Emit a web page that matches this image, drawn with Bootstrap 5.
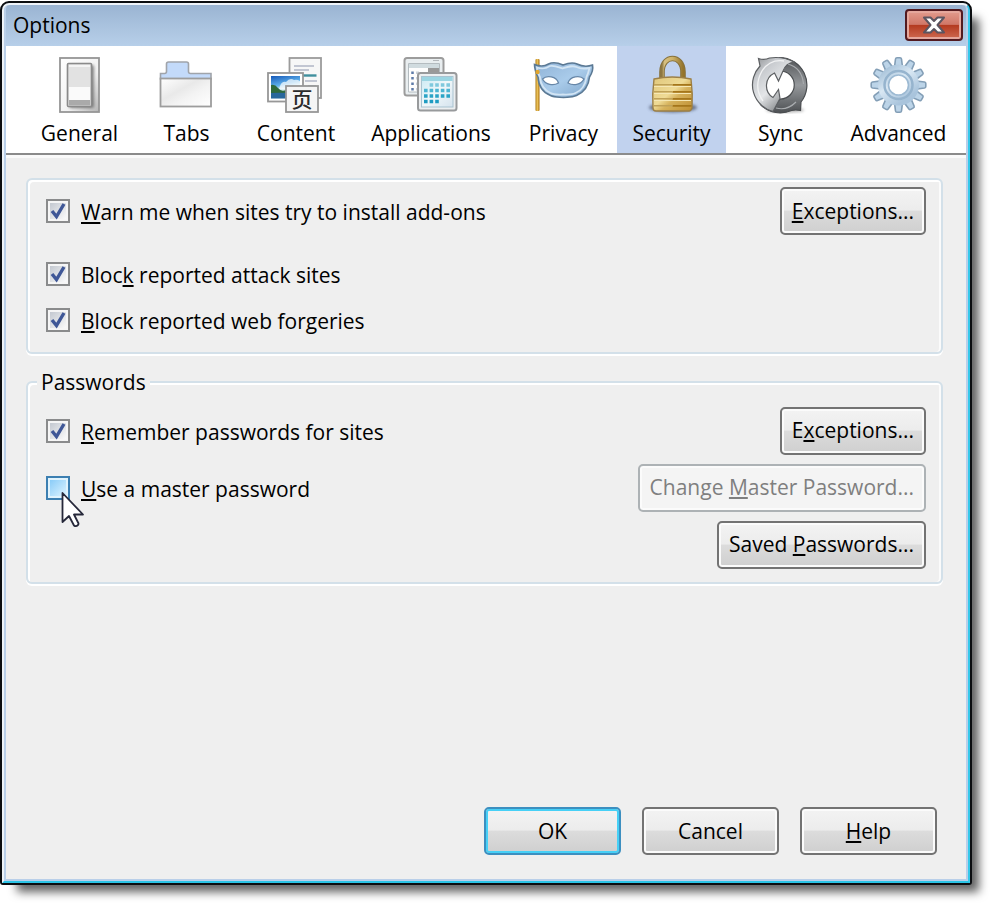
<!DOCTYPE html>
<html lang="en">
<head>
<meta charset="utf-8">
<meta name="viewport" content="width=device-width, initial-scale=1">
<title>Options</title>
<link href="https://cdn.jsdelivr.net/npm/bootstrap@5.3.0/dist/css/bootstrap.min.css" rel="stylesheet">
<style>
  body { font-family: "Open Sans", "Noto Sans CJK SC", sans-serif; font-size: 21px; line-height: 30px; color: #000; background: #fff; }
  u { text-decoration-thickness: 2px; text-underline-offset: 2px; text-decoration-skip-ink: none; }

  .page { min-height: 100vh; padding: 1px 28px 26px 0; }
  .dialog-edge { border: 2px solid #0b0d10; border-radius: 9px 9px 3px 3px; background: #0b0d10; box-shadow: 12px 12px 10px -5px rgba(0,0,0,.62); }
  .dialog-rim { border: 2px solid; border-color: #eef3f8 #35c8ea #2bc4e6 #eef3f8; border-radius: 7px 7px 0 0; background: #b9d1ea; }
  .dialog-face { border: solid #b9cfe9; border-width: 0 2px 2px; border-radius: 5px 5px 0 0; background: #efefef; }

  .titlebar { height: 41px; padding: 0 3px 2px 7px; background: linear-gradient(#9ab4d2, #a9c2de 50%, #b7cfe9); border-radius: 4px 4px 0 0; }
  .titlebar h1 { font-size: 21px; line-height: 30px; font-weight: 400; }
  .close-button { width: 58px; height: 32px; padding: 0; border: 2px solid #521a20; border-radius: 4px; box-shadow: inset 0 0 0 2px #e5a79c; background: linear-gradient(#e39c8e, #d07768 48%, #b3391f 50%, #cf6a52); }

  .tab-strip { display: grid; grid-template-columns: 107fr 107fr 112fr 158fr 107fr 109fr 109fr 127fr; padding: 0 4px 0 20px; background: #fff; border-bottom: 2px solid #8b8b8b; box-shadow: 0 3px 0 #fafafa; }
  .tab-strip a { padding: 9px 0 5px; color: #000; text-decoration: none; white-space: nowrap; }
  .tab-strip a.active { background: #c1d2ee; }
  .tab-strip svg { width: 64px; height: 60px; margin-bottom: 3px; }

  .pane { padding: 23px 23px 0 20px; }
  .group-frame { border: 2px solid #d3e0e9; border-radius: 6px; box-shadow: inset 2px 2px 0 #fff, inset -2px 0 0 #fbfbfb, 0 2px 0 #fff; padding: 0 15px 0 18px; }
  .group-frame + .group-frame { margin-top: 13px; }
  .group-frame legend { font-size: 21px; line-height: 30px; margin: 0 0 5px -9px; padding: 0 4px; background: #efefef; }

  .tick { flex: none; width: 24px; height: 24px; margin: 0; appearance: none; border: 2px solid #8a8b8c; background: #f6f6f6 linear-gradient(135deg, #c3c8d0, #fafafa) center / 16px 16px no-repeat; }
  .tick:checked { background: url("data:image/svg+xml,%3Csvg xmlns='http://www.w3.org/2000/svg' viewBox='0 0 20 20'%3E%3Cpath d='M4 10l4.500 5.500 7.500-12.500' fill='none' stroke='%233f5797' stroke-width='3.400'/%3E%3C/svg%3E") center / 20px 20px no-repeat, #f6f6f6 linear-gradient(135deg, #c3c8d0, #fafafa) center / 16px 16px no-repeat; }
  .tick.hot { border-color: #3c7fb1; background: #e0f3fd linear-gradient(135deg, #8accf8, #dcf3ff) center / 16px 16px no-repeat; }
  .group-frame label { padding: 2px 0 0 3px; }
  .pointer { position: absolute; left: 15px; top: 15px; width: 24px; height: 38px; pointer-events: none; }

  .push { height: 48px; padding: 0 10px 1px; border: 2px solid #737373; border-radius: 5px; color: #000; font-size: 21px; line-height: 30px; white-space: nowrap; background: linear-gradient(#f3f3f3, #ececec 48%, #dcdcdc 50%, #cfcfcf); box-shadow: inset 0 0 0 2px #fbfbfb; }
  .push:disabled { border-color: #adb2b5; background: #f4f4f4; color: #7f7f7f; }
  .push.default { border-color: #3c8fc0; box-shadow: inset 0 0 0 2px #46d0f6; }
  .push.wide { width: 137px; }

  .row-first { min-height: 58px; margin-bottom: 13px; }
  .row-tall { min-height: 57px; }
  .row-short { min-height: 46px; }
  .row-last { margin-bottom: 9px; }
  .actions { margin-top: 223px; padding: 0 6px 24px 0; gap: 21px; }
</style>
</head>
<body>
<div class="page">
<main class="dialog-edge">
<div class="dialog-rim">
<div class="dialog-face">

  <header class="titlebar d-flex align-items-center justify-content-between">
    <h1 class="m-0">Options</h1>
    <button type="button" class="close-button d-flex align-items-center justify-content-center" aria-label="Close">
      <svg width="24" height="20" viewBox="0 0 24 20"><path d="M2 2.500h6.500l3.500 3.500 3.500-3.500H22L15.500 10l6.500 7.500h-6.500L12 14l-3.500 3.500H2L8.500 10z" fill="#fff" stroke="#5c5560" stroke-width="2" stroke-linejoin="round"/></svg>
    </button>
  </header>

  <nav class="tab-strip" aria-label="Option categories">
    <a href="#general" class="d-flex flex-column align-items-center">
      <svg viewBox="0 0 64 60" aria-hidden="true">
        <defs>
          <linearGradient id="sw" x2="1" y2="1"><stop stop-color="#fff"/><stop offset=".6" stop-color="#f2f2f2"/><stop offset="1" stop-color="#b5b5b5"/></linearGradient>
          <filter id="soft" x="-30%" y="-30%" width="160%" height="160%"><feGaussianBlur stdDeviation="1.500"/></filter>
        </defs>
        <rect x="12" y="3" width="39" height="54" fill="url(#sw)" stroke="#969696" stroke-width="1.800"/>
        <rect x="21" y="10" width="25" height="43" rx="2" fill="#555" opacity=".7" filter="url(#soft)"/>
        <rect x="19.500" y="8.500" width="24" height="43" rx="1" fill="#e2e2e2" stroke="#8a8a8a" stroke-width="1.600"/>
        <path d="M21 32h21v13H21z" fill="#fafafa"/><path d="M21 10h21v2H21z" fill="#f4f4f4"/><path d="M21 45h21v5.500H21z" fill="#aaa"/>
      </svg>
      <span>General</span>
    </a>
    <a href="#tabs" class="d-flex flex-column align-items-center">
      <svg viewBox="0 0 64 60" aria-hidden="true">
        <defs><linearGradient id="fo" x2="1" y2="1"><stop stop-color="#fff"/><stop offset=".4" stop-color="#e9e9e9"/><stop offset=".6" stop-color="#f3f3f3"/><stop offset="1" stop-color="#fff"/></linearGradient></defs>
        <path d="M5.500 24v-5.500h4q2 0 2-2V9q0-2 2-2h18q2 0 2 2v7.500q0 2 2 2H56V24z" fill="#c3dafa" stroke="#a0a4aa" stroke-width="1.600"/>
        <rect x="5.500" y="23.500" width="50.500" height="28" fill="url(#fo)" stroke="#9d9d9d" stroke-width="1.800"/>
      </svg>
      <span>Tabs</span>
    </a>
    <a href="#content" class="d-flex flex-column align-items-center">
      <svg viewBox="0 0 64 60" aria-hidden="true">
        <defs><linearGradient id="sky" x2=".3" y2="1"><stop stop-color="#1457b8"/><stop offset=".45" stop-color="#5eb0ea"/><stop offset=".65" stop-color="#d8eef2"/></linearGradient></defs>
        <rect x="25.500" y="3" width="31.500" height="40" fill="#f7f7f7" stroke="#9b9b9b" stroke-width="1.800"/>
        <path d="M30 11h20M30 15h15M41 26h12M44 31h8M45 36h7" stroke="#c2c6d2" stroke-width="1.800"/>
        <path d="M39 20.500h13.500" stroke="#3f8f9d" stroke-width="2.400"/>
        <rect x="4" y="18" width="35" height="28.500" fill="#fff" stroke="#979797" stroke-width="1.800"/>
        <rect x="7" y="21" width="29" height="22.500" fill="url(#sky)"/>
        <path d="M16 31q2-5 6-4 4-5 8-2 3-1 6 1v8H15z" fill="#fff" opacity=".7"/>
        <path d="M7 30q4-1 7 3t8 2l14 0v4H7z" fill="#2f6a3c"/><path d="M7 38q10-1 29 1v4.500H7z" fill="#28679b"/>
        <rect x="22" y="31" width="32" height="26" fill="#f5f5f5" stroke="#979797" stroke-width="1.800"/>
        <text x="38" y="52" text-anchor="middle" font-family="Noto Sans CJK SC, sans-serif" font-size="21" font-weight="500" fill="#2b2b2b">页</text>
      </svg>
      <span>Content</span>
    </a>
    <a href="#applications" class="d-flex flex-column align-items-center">
      <svg viewBox="0 0 64 60" aria-hidden="true">
        <defs><linearGradient id="cal" x2="1" y2="1"><stop stop-color="#c9e9f3"/><stop offset=".5" stop-color="#f1f8fa"/><stop offset="1" stop-color="#d5e3ee"/></linearGradient></defs>
        <rect x="5.500" y="3" width="39" height="37.500" rx="2.500" fill="#e9eef0" stroke="#9c9c9c" stroke-width="2"/>
        <path d="M9.500 8.500h31V37h-31z" fill="#fdfdfd" stroke="#b4bcc0"/><path d="M10 9h30v4H10z" fill="#d0dbdf"/><path d="M29 13h11v5H29z" fill="#999"/><path d="M34 5.500h6" stroke="#b4b8bc"/>
        <path d="M13.500 16.500v19" stroke="#5c7aa8" stroke-width="2.500" stroke-dasharray="2.500 3"/>
        <path d="M18.500 16.500v19" stroke="#ccd3da" stroke-width="3" stroke-dasharray="2.500 3"/>
        <rect x="19" y="18" width="38.500" height="37.500" rx="2.500" fill="#eceff1" stroke="#989a9c" stroke-width="2"/>
        <rect x="22.500" y="21.500" width="31.500" height="30.500" fill="url(#cal)" stroke="#a9c3d0"/><path d="M23 22h30.500v4H23z" fill="#9bd5e2"/>
        <g stroke="#2aa4c6" stroke-width="3.600" stroke-dasharray="3.600 2" fill="none">
          <path d="M30.600 30h21" stroke="#7fc9dd"/><path d="M25 35.500h26.500" stroke="#4cb5d2"/><path d="M25 41h26.500"/><path d="M25 46.500h15" stroke="#1e9cc2"/>
        </g>
      </svg>
      <span>Applications</span>
    </a>
    <a href="#privacy" class="d-flex flex-column align-items-center">
      <svg viewBox="0 0 64 60" aria-hidden="true">
        <defs>
          <linearGradient id="mk" x2="1" y2="1"><stop stop-color="#8fb2d6"/><stop offset=".5" stop-color="#a9cbea"/><stop offset="1" stop-color="#7da4c9"/></linearGradient>
          <linearGradient id="st"><stop stop-color="#a87510"/><stop offset=".45" stop-color="#f0c65c"/><stop offset="1" stop-color="#a36c0c"/></linearGradient>
        </defs>
        <rect x="3.500" y="4" width="4" height="52" rx="1" fill="url(#st)"/>
        <path d="M2.500 9.500c5 2 9 2.500 14-.5 4-2 10-1 14.500 1 5-2 10-3 14-1 5 2.500 10 3 15.500 1 1 5-1 9-3 12-1 10-6 15.500-13 18.500-5 2-8 1.500-13 2-5-.5-9 0-13-2C11 37.500 6.500 31 6 22c-2-4-3.500-8-3.500-12.500z" fill="url(#mk)" stroke="#5b7994" stroke-width="1.600"/>
        <path d="M5 12.500c6 2 9 1 13-1.500 4-1 8 1 12.500 2.500 6-2 10-3.500 14-1.500 4 2 8 2 13 1-1 4-2 7-3 9-1 8-5 13.500-11 16-4 2-8 1.500-12.500 1.500-5 0-9 .5-12.500-1.500C12 35 8.500 29 8 22c-2-3-3-6-3-9.500z" fill="none" stroke="#d3e5f4" stroke-width="1.800"/>
        <path d="M10.500 24c4-4 14-3 16 4-5 3-13 2-16-4zM52 24c-4-4-14-3-16 4 5 3 13 2 16-4z" fill="#fff" stroke="#6787a8" stroke-width="1.300"/>
        <circle cx="5.500" cy="17" r="2.200" fill="#e2a52c"/>
      </svg>
      <span>Privacy</span>
    </a>
    <a href="#security" class="active d-flex flex-column align-items-center" aria-current="page">
      <svg viewBox="0 0 64 60" aria-hidden="true">
        <defs>
          <linearGradient id="bd" x2="1" y2="1"><stop stop-color="#e0c77b"/><stop offset=".45" stop-color="#efdb96"/><stop offset=".6" stop-color="#d6b25c"/><stop offset="1" stop-color="#bd8d30"/></linearGradient>
          <linearGradient id="sh"><stop stop-color="#8d7742"/><stop offset=".12" stop-color="#d6bf80"/><stop offset=".5" stop-color="#ceb268"/><stop offset="1" stop-color="#94742c"/></linearGradient>
        </defs>
        <ellipse cx="33" cy="52.500" rx="24" ry="5" fill="#4e5870" opacity=".75" filter="url(#soft)"/>
        <path d="M22 26V17C22 -1 43 -1 43 17v9" fill="none" stroke="#86713c" stroke-width="5.600"/>
        <path d="M22 26V17C22 -1 43 -1 43 17v9" fill="none" stroke="url(#sh)" stroke-width="3.600"/>
        <path d="M14 24q18-4 37 0 2 15 1 29-1 3-3 3H16q-3 0-3-3-1-14 1-29z" fill="url(#bd)" stroke="#9c8048" stroke-width="1.400"/>
        <path d="M32.500 29h19v1.800h-19zM32.500 36h19v1.800h-19zM32.500 43h19v1.800h-19zM32.500 50h19v1.800h-19z" fill="#a4761b"/>
        <path d="M14 29h18.500v1.500H14zM14 36h18.500v1.500H14zM14 43h18.500v1.500H14zM14 50h18.500v1.500H14z" fill="#bfa158"/>
        <path d="M14 31.500h37M14 38.500h37M14 45.500h37" stroke="#f6e8b5" stroke-width="1.200"/>
      </svg>
      <span>Security</span>
    </a>
    <a href="#sync" class="d-flex flex-column align-items-center">
      <svg viewBox="0 0 64 60" aria-hidden="true">
        <defs>
          <linearGradient id="s1" x2=".7" y2="1"><stop stop-color="#8a8c8e"/><stop offset=".3" stop-color="#c9ccd0"/><stop offset=".6" stop-color="#e4e6e8"/><stop offset="1" stop-color="#7a7d80"/></linearGradient>
          <linearGradient id="s2" x2="0" y2="1"><stop stop-color="#505356"/><stop offset=".5" stop-color="#96999c"/><stop offset="1" stop-color="#4d5053"/></linearGradient>
        </defs>
        <ellipse cx="36" cy="55" rx="19" ry="2.500" fill="#777" opacity=".6" filter="url(#soft)"/>
        <path d="M30.500 2.500A27.500 27.500 0 0 1 52 47l-.5 8.500q-5-1-9 0a27.500 27.500 0 0 1-30-5q12 3 19-6.500A14 14 0 0 0 31 16z" fill="url(#s2)" stroke="#494c4f" stroke-width="1.200"/>
        <path d="M9.500 3.500q6 2 11-.5 13-2 24.500 4Q37 8 34 16l-4.500 10-4-8A14 14 0 0 0 24 42.500l5.500-8 1.500 9-7 13A27.500 27.500 0 0 1 11 11q-.500-3-1.500-7.500z" fill="url(#s1)" stroke="#5c5f62" stroke-width="1.200"/>
        <path d="M35 6q-14-2-22 10-9 16 1 30" stroke="#f1f2f3" stroke-width="1.300" fill="none"/>
        <path d="M39 9q14 4 15.500 20M27 53q11 3 20-6" stroke="#a9acaf" stroke-width="1.200" fill="none"/>
      </svg>
      <span>Sync</span>
    </a>
    <a href="#advanced" class="d-flex flex-column align-items-center">
      <svg viewBox="0 0 64 60" aria-hidden="true">
        <defs>
          <linearGradient id="gr" x2=".7" y2="1"><stop stop-color="#a8c3da"/><stop offset=".45" stop-color="#d8e7f3"/><stop offset="1" stop-color="#a9c4dc"/></linearGradient>
          <path id="tooth" d="M27.500 12l1-8q.200-1.300 1.500-1.300h3q1.300 0 1.500 1.300l1 8z"/>
          <g id="teeth"><use href="#tooth"/><use href="#tooth" transform="rotate(30 31.500 30)"/><use href="#tooth" transform="rotate(60 31.500 30)"/><use href="#tooth" transform="rotate(90 31.500 30)"/><use href="#tooth" transform="rotate(120 31.500 30)"/><use href="#tooth" transform="rotate(150 31.500 30)"/></g>
        </defs>
        <g fill="#bcd4e8" stroke="#839eb6" stroke-width="1.600"><use href="#teeth"/><use href="#teeth" transform="rotate(180 31.500 30)"/></g>
        <circle cx="31.500" cy="30" r="15" fill="none" stroke="url(#gr)" stroke-width="11"/>
        <circle cx="31.500" cy="30" r="14" fill="none" stroke="#96b4ce" stroke-width="2.500"/>
        <circle cx="31.500" cy="30" r="10" fill="#fff" stroke="#9dbad3" stroke-width="1.600"/>
      </svg>
      <span>Advanced</span>
    </a>
  </nav>

  <form class="pane" onsubmit="return false">
    <fieldset class="group-frame" aria-label="Site warnings">
      <div class="d-flex align-items-center justify-content-between pt-1 row-first">
        <div class="d-flex align-items-center gap-2">
          <input class="tick" type="checkbox" id="warn" checked>
          <label for="warn"><u>W</u>arn me when sites try to install add-ons</label>
        </div>
        <button type="button" class="push"><u>E</u>xceptions...</button>
      </div>
      <div class="d-flex align-items-center gap-2 row-short">
        <input class="tick" type="checkbox" id="attack" checked>
        <label for="attack">Bloc<u>k</u> reported attack sites</label>
      </div>
      <div class="d-flex align-items-center gap-2 row-short row-last">
        <input class="tick" type="checkbox" id="forgery" checked>
        <label for="forgery"><u>B</u>lock reported web forgeries</label>
      </div>
    </fieldset>

    <fieldset class="group-frame">
      <legend class="float-none w-auto">Passwords</legend>
      <div class="d-flex align-items-center justify-content-between row-tall">
        <div class="d-flex align-items-center gap-2">
          <input class="tick" type="checkbox" id="remember" checked>
          <label for="remember"><u>R</u>emember passwords for sites</label>
        </div>
        <button type="button" class="push">E<u>x</u>ceptions...</button>
      </div>
      <div class="d-flex align-items-center justify-content-between row-tall">
        <div class="d-flex align-items-center gap-2">
          <span class="position-relative d-flex">
            <input class="tick hot" type="checkbox" id="master">
            <svg class="pointer" viewBox="0 0 24 38" aria-hidden="true"><path d="M1.500 2v29l6.500-6 5 9.500q2 1.500 4-.500.800-1 .300-2L13 23.500h9z" fill="#fff" stroke="#26283a" stroke-width="1.800" stroke-linejoin="round"/></svg>
          </span>
          <label for="master"><u>U</u>se a master password</label>
        </div>
        <button type="button" class="push" disabled>Change <u>M</u>aster Password...</button>
      </div>
      <div class="d-flex align-items-center justify-content-end row-tall row-last">
        <button type="button" class="push">Saved <u>P</u>asswords...</button>
      </div>
    </fieldset>

    <div class="actions d-flex justify-content-end">
      <button type="submit" class="push wide default">OK</button>
      <button type="button" class="push wide">Cancel</button>
      <button type="button" class="push wide"><u>H</u>elp</button>
    </div>
  </form>

</div>
</div>
</main>
</div>
<script src="https://cdn.jsdelivr.net/npm/bootstrap@5.3.0/dist/js/bootstrap.bundle.min.js"></script>
</body>
</html>
